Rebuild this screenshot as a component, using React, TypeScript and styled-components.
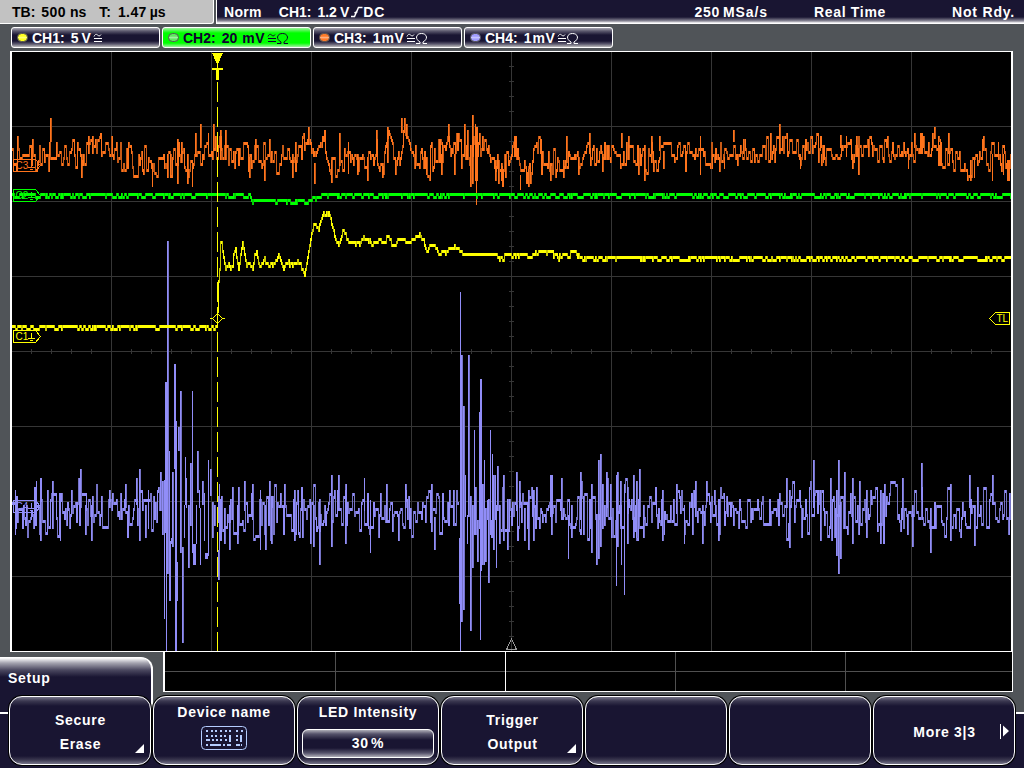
import React from "react";
import styled, { createGlobalStyle } from "styled-components";

type Span = [x: number, top: number, bottom: number, width?: number];
type Point = [x: number, y: number];

const LEFT = 12;
const RIGHT = 1011;
const NAVY = "#191532";

// small deterministic generator, so the traces are the same on every render
const createRandom = (seed: number) => {
  let s = seed;
  return () => {
    s = (s * 1664525 + 1013904223) % 4294967296;
    return s / 4294967296;
  };
};

const lerp = (points: Point[], x: number) => {
  for (let i = 1; i < points.length; i++) {
    const [x1, y1] = points[i];
    if (x <= x1) {
      const [x0, y0] = points[i - 1];
      return y0 + ((y1 - y0) * (x - x0)) / (x1 - x0 || 1);
    }
  }
  return points[points.length - 1][1];
};

// the scope resolves three screen pixels per ADC level
const snap = (y: number, origin: number) =>
  origin + Math.round((y - origin) / 3) * 3;

// one vertical bar per pixel column, split in a bright and a dim path
const bars = (
  levels: number[],
  fixed: Span[] = [],
  gaps: Point[] = []
) => {
  const covered = new Set<number>();
  let bright = "";
  let dim = "";
  levels.forEach((y, i) => {
    const x = LEFT + i;
    if (gaps.some(([from, to]) => x >= from && x < to)) return;
    const prev = i ? levels[i - 1] : y;
    const next = levels[i + 1] ?? y;
    const bar = `M${x + 0.5} ${Math.min(prev, y)}V${Math.max(prev, y) + 3}`;
    if (prev !== y && (y === next || i % 3 === 0)) dim += bar;
    else bright += bar;
  });
  fixed.forEach(([x, top, bottom, width = 2]) => {
    for (let i = 0; i < width; i++) {
      if (covered.has(x + i)) continue;
      const bar = `M${x + i + 0.5} ${top}V${bottom}`;
      if (i === 1 && width === 2) dim += bar;
      else bright += bar;
    }
  });
  return { bright, dim };
};

const noisy = (
  seed: number,
  center: Point[],
  spread: Point[],
  origin: number,
  hold: number,
  flip: number
) => {
  const random = createRandom(seed);
  const levels: number[] = [];
  let last = 0;
  let sign = 1;
  for (let x = LEFT; x < RIGHT; x++) {
    if (x === LEFT || random() > hold) {
      if (random() < flip) sign = -sign;
      const a = random();
      last = sign * a * (0.45 + 0.55 * random()) * lerp(spread, x);
    }
    levels.push(snap(lerp(center, x) + last, origin));
  }
  return levels;
};

const toggling = (seed: number, shape: Point[], origin: number, still: Point[]) => {
  const random = createRandom(seed);
  const levels: number[] = [];
  let low = false;
  for (let x = LEFT; x < RIGHT; x++) {
    const quiet = still.some(([from, to]) => x >= from && x < to);
    if (random() > (low ? 0.55 : 0.78)) low = !low;
    levels.push(snap(lerp(shape, x), origin) + (low && !quiet ? 3 : 0));
  }
  return levels;
};

const ch1Shape: Point[] = [
  [12, 325], [216, 325], [217, 310], [218, 280], [219, 268], [220, 241], [221, 241],
  [223, 256], [225, 267], [228, 262], [230, 267], [232, 264], [233, 253], [235, 247],
  [237, 262], [238, 268], [240, 253], [242, 241], [244, 253], [246, 264], [249, 262],
  [252, 268], [254, 253], [256, 250], [258, 262], [260, 265], [264, 256], [268, 264],
  [274, 262], [278, 253], [283, 265], [287, 260], [292, 262], [298, 260], [301, 264],
  [304, 274], [306, 262], [308, 250], [311, 232], [313, 223], [316, 225], [318, 228],
  [321, 217], [323, 211], [324, 214], [326, 211], [327, 214], [328, 211], [330, 217],
  [332, 226], [335, 238], [338, 244], [340, 238], [342, 229], [345, 232], [351, 241],
  [358, 241], [364, 235], [367, 235], [371, 243], [375, 238], [383, 240], [387, 235],
  [392, 241], [400, 238], [412, 238], [416, 235], [420, 232], [424, 241], [426, 247],
  [433, 243], [438, 252], [446, 250], [453, 244], [460, 250], [464, 253], [495, 253],
  [499, 256], [507, 253], [523, 253], [530, 256], [536, 250], [551, 250], [557, 255],
  [575, 250], [580, 256], [1011, 256],
];

const ch2Shape: Point[] = [
  [12, 193], [249, 193], [252, 199], [257, 199], [258, 200], [304, 200], [307, 199],
  [313, 197], [318, 195], [326, 193], [1011, 193],
];

const ch3Center: Point[] = [
  [12, 150], [40, 153], [60, 152], [80, 153], [100, 145], [115, 147], [130, 157],
  [150, 161], [170, 160], [190, 158], [215, 150], [240, 155], [260, 152], [290, 156],
  [308, 146], [315, 163], [324, 140], [331, 163], [345, 156], [370, 158], [376, 147],
  [383, 165], [388, 140], [396, 164], [403, 128], [407, 134], [410, 150], [420, 150],
  [427, 162], [440, 148], [470, 152], [485, 145], [499, 170], [508, 163], [515, 144],
  [520, 176], [526, 172], [537, 150], [550, 165], [565, 158], [600, 150], [640, 156],
  [700, 152], [750, 152], [780, 144], [800, 153], [810, 142], [830, 156], [850, 148],
  [875, 145], [890, 152], [910, 145], [935, 143], [942, 155], [973, 165], [983, 150],
  [1000, 160], [1011, 163],
];

const ch3Spikes: Span[] = [
  [50, 118, 142], [81, 154, 178], [88, 136, 154], [92, 136, 154], [152, 163, 187, 1],
  [167, 154, 178], [170, 154, 178], [177, 139, 184], [181, 142, 163], [187, 154, 184],
  [192, 160, 187, 1], [195, 133, 157], [200, 124, 148], [208, 133, 154, 1],
  [213, 124, 151], [220, 130, 160], [225, 130, 160], [249, 157, 178], [255, 139, 160],
  [264, 160, 181], [269, 139, 154], [292, 154, 178], [295, 142, 160], [308, 127, 145],
  [314, 163, 184], [324, 130, 142, 1], [331, 160, 183], [339, 133, 166], [348, 142, 174, 1],
  [357, 154, 175], [367, 157, 181], [376, 130, 151], [382, 163, 178], [387, 127, 163],
  [395, 160, 175], [401, 118, 133], [406, 124, 139], [426, 157, 175], [441, 154, 175],
  [448, 124, 142], [454, 154, 175], [464, 124, 157], [467, 130, 160], [470, 145, 187],
  [472, 115, 184], [475, 124, 181, 1], [476, 127, 205, 1], [477, 127, 181, 1],
  [482, 136, 151], [495, 160, 181], [498, 160, 184], [501, 163, 181], [514, 136, 157, 3],
  [520, 175, 190, 1], [528, 169, 187], [540, 139, 154], [550, 163, 181], [563, 160, 178],
  [566, 136, 163], [578, 157, 175], [589, 133, 154], [602, 154, 172], [621, 133, 148],
  [628, 136, 160], [638, 157, 175], [644, 145, 181], [651, 136, 163], [659, 136, 151],
  [663, 151, 169], [700, 136, 175, 1], [712, 154, 169, 1], [724, 157, 169, 1],
  [733, 130, 142], [743, 139, 154], [779, 124, 154], [800, 154, 169, 1], [821, 154, 166],
  [840, 135, 148], [846, 136, 157, 1], [852, 154, 169], [856, 136, 148], [858, 148, 175],
  [908, 154, 169, 1], [914, 133, 148], [920, 133, 154, 3], [934, 127, 139],
  [938, 145, 166, 3], [948, 133, 154], [970, 160, 181], [974, 160, 178, 1],
  [983, 136, 151], [992, 154, 181, 1], [998, 142, 160, 1], [1003, 154, 175, 1],
  [1007, 160, 181, 3],
];

const ch4Spikes: Span[] = [
  [15, 490, 535, 1], [36, 481, 526, 1], [40, 490, 541], [52, 481, 529], [60, 493, 541, 1],
  [80, 469, 506], [85, 505, 535], [91, 505, 541], [109, 490, 508], [125, 484, 508],
  [136, 478, 505], [139, 469, 541], [145, 505, 538], [148, 490, 529, 1],
  [160, 472, 511], [162, 481, 535], [164, 480, 619, 1], [165, 382, 533, 1], [166, 382, 651, 1],
  [167, 241, 574], [169, 451, 601, 1], [170, 541, 601, 1], [171, 538, 544, 1],
  [172, 472, 547], [174, 364, 469, 1], [175, 364, 651, 1], [176, 421, 651, 1],
  [177, 562, 601, 1], [178, 427, 451], [180, 391, 553], [182, 547, 643], [184, 505, 538, 1],
  [185, 457, 505, 1], [186, 478, 508, 1], [188, 505, 568], [190, 463, 526], [192, 391, 553, 1],
  [193, 544, 565, 3], [196, 505, 544, 1], [197, 451, 493], [199, 490, 508, 1], [200, 508, 565, 1],
  [202, 481, 505], [204, 493, 541, 1], [205, 553, 559, 3], [208, 460, 556, 1],
  [210, 469, 496], [212, 502, 538], [214, 505, 526], [218, 550, 580], [219, 484, 550, 1],
  [224, 508, 544], [229, 505, 550], [237, 505, 544], [244, 481, 511], [252, 484, 520],
  [260, 490, 550, 1], [265, 505, 550], [271, 496, 544], [294, 490, 541], [313, 505, 547],
  [319, 499, 565], [331, 475, 547], [338, 475, 511], [345, 490, 544], [364, 478, 511, 1],
  [370, 500, 553, 1], [386, 484, 520], [405, 484, 508], [431, 484, 532], [434, 517, 550],
  [453, 490, 526], [459, 538, 604, 1], [460, 292, 651, 1], [461, 355, 622], [463, 406, 610],
  [465, 475, 517, 1], [467, 515, 544, 1], [468, 355, 517], [470, 496, 631], [472, 505, 568],
  [474, 430, 535, 1], [475, 487, 535], [477, 520, 562], [479, 412, 529, 1], [480, 379, 640, 1],
  [481, 379, 571, 1], [482, 484, 565], [484, 460, 565, 1], [485, 508, 562], [487, 500, 520, 1],
  [488, 499, 583], [490, 430, 535, 1], [491, 520, 538, 1], [492, 454, 538, 1], [493, 475, 550],
  [495, 475, 520, 1], [496, 505, 568, 1], [497, 466, 511], [499, 505, 544], [503, 475, 541],
  [507, 499, 550], [516, 472, 511], [519, 481, 508], [524, 508, 541], [528, 490, 550],
  [533, 490, 541], [550, 475, 517, 3], [561, 478, 520, 2], [568, 515, 559, 1], [571, 505, 538],
  [580, 472, 520], [591, 484, 553], [596, 514, 565], [598, 460, 559], [600, 454, 547],
  [602, 484, 529], [606, 472, 517], [610, 484, 520], [616, 475, 586, 1], [617, 472, 547],
  [620, 481, 526], [621, 505, 565, 1], [624, 484, 595, 1], [627, 487, 544], [633, 475, 538],
  [636, 481, 538], [639, 469, 517], [643, 505, 538], [662, 490, 538], [676, 484, 514],
  [684, 505, 544, 1], [695, 481, 517, 2], [702, 505, 544], [706, 481, 502], [714, 490, 505],
  [718, 508, 541], [786, 478, 508], [789, 490, 548], [813, 460, 508], [820, 490, 541],
  [830, 478, 526], [836, 490, 556], [838, 460, 574], [840, 502, 559], [844, 472, 526],
  [852, 478, 544], [866, 490, 538], [880, 490, 544], [902, 478, 520], [912, 505, 547],
  [921, 463, 500], [930, 508, 553], [950, 484, 541], [969, 475, 508], [974, 505, 546],
  [992, 475, 505],
];

const keyRows = [
  [[206, 2], [211, 2], [215, 2], [220, 2], [225, 2], [229, 2], [236, 2], [241, 2]],
  [[206, 2], [211, 2], [215, 2], [220, 2], [224, 2], [229, 2], [236, 2], [240, 2]],
  [[206, 4], [212, 2], [216, 2], [220, 2], [225, 2], [229, 2], [236, 2], [240, 2]],
  [[206, 2], [210, 11], [223, 2], [227, 4], [236, 4], [241, 1]],
];

const traces = [
  {
    color: "#918df8",
    dimColor: "#7573c6",
    ...bars(
      noisy(
        77,
        [[12, 508], [300, 511], [1011, 510]],
        [[12, 34], [95, 31], [115, 24], [150, 32], [300, 36], [450, 31], [560, 30], [600, 40], [640, 32], [740, 26], [800, 32], [850, 40], [1011, 33]],
        511,
        0.35,
        0.62
      ),
      ch4Spikes,
      [[163, 218], [459, 500]]
    ),
  },
  {
    color: "#ff741c",
    dimColor: "#c65a16",
    ...bars(noisy(31, ch3Center, [[12, 20], [230, 20], [640, 18], [1011, 18]], 154, 0.35, 0.5), ch3Spikes),
  },
  {
    color: "#00ff00",
    dimColor: "#00d000",
    ...bars(toggling(9, ch2Shape, 193, [])),
  },
  {
    color: "#ffff00",
    dimColor: "#c8c800",
    ...bars(toggling(4, ch1Shape, 256, [[216, 262], [302, 346], [464, 496], [620, 640]])),
  },
];

const range = (from: number, to: number, step: number) => {
  const list: number[] = [];
  for (let v = from; v < to; v += step) list.push(v);
  return list;
};

const ChannelTag = ({ y, name, color }: { y: number; name: string; color: string }) => (
  <g transform={`translate(13 ${y})`} stroke={color} fill="none">
    <path d="M.5.5H22.5L27.5 6.5L22.5 12.5H.5Z" />
    <TagText x="2.5" y="10" fill={color} stroke="none">
      {name}
    </TagText>
    <path d="M18.5 3V8M15 8.5H22M17 10.5H20" />
  </g>
);

const Waveforms = () => (
  <Plot width="999" height="599" viewBox="12 52 999 599" shapeRendering="crispEdges">
    <path
      stroke="#363636"
      d={
        range(111, 1011, 100).map((x) => `M${x}.5 52V651`).join("") +
        range(126, 651, 75).map((y) => `M12 ${y}.5H1011`).join("") +
        range(66, 651, 15).map((y) => `M509 ${y}.5H514`).join("") +
        range(31, 1011, 20).map((x) => `M${x}.5 349V354`).join("")
      }
    />
    {traces.map(({ color, dimColor, bright, dim }) => (
      <g key={color}>
        <path stroke={dimColor} d={dim} />
        <path stroke={color} d={bright} />
      </g>
    ))}
    <path stroke="#ffff00" strokeDasharray="20 5" d="M217.5 82V651" />
    <path fill="#ffff00" d="M212 53H223L218 64V68H223V70H219V80H216V70H212V68H217V64Z" />
    <path
      stroke="#ffff00"
      fill="none"
      d="M210 318.5H213M222 318.5H225M217.5 313.5L222.5 318.5L217.5 323.5L212.5 318.5Z"
    />
    <ChannelTag y={159} name="C3" color="#ff741c" />
    <ChannelTag y={189} name="C2" color="#00ff00" />
    <ChannelTag y={330} name="C1" color="#ffff00" />
    <ChannelTag y={500} name="C4" color="#918df8" />
    <path stroke="#ffff00" fill="none" d="M1009.5 312.5H995.5L989.5 318.5L995.5 324.5H1009.5Z" />
    <TagText x="996.5" y="322" fill="#ffff00">
      TL
    </TagText>
    <path stroke="#999" fill="none" d="M511.5 639L506.5 649.5H516.5Z" />
  </Plot>
);

const KeyboardIcon = () => (
  <svg width="46" height="24" viewBox="201 726 46 24" fill="#b5cdff">
    <rect x="201.5" y="726.5" width="45" height="23" rx="4" fill="none" stroke="#b5cdff" />
    {keyRows.map((row, i) =>
      row.map(([x, w]) => (
        <rect
          key={`${i}-${x}`}
          x={x}
          y={730 + Math.round(i * 4.7)}
          width={w}
          height={2}
          shapeRendering="crispEdges"
        />
      ))
    )}
    <path d="M229 735h2v7h-2zM240 735h2v7h-2z" shapeRendering="crispEdges" />
  </svg>
);

const Coupling = ({ ohm }: { ohm?: boolean }) => (
  <CouplingIcon width="22" height="14" viewBox="0 0 22 14" fill="none" stroke="currentColor">
    <path d="M1 5.500C2 3 3.500 3 4.500 4S7 5.500 8 3.500M1 7.500H9M1 10.500H9" />
    {ohm && (
      <path d="M10 12.500H14V11C11.500 9.500 10.500 8 10.500 6C11 3.500 13 2.500 15.500 2.500S20 3.500 20.500 6C20.500 8 19.500 9.500 17 11V12.500H21" />
    )}
  </CouplingIcon>
);

const channels = [
  { name: "CH1:", value: "5", unit: "V", color: "#ffff20" },
  { name: "CH2:", value: "20", unit: "mV", color: "#60e860", active: true, ohm: true },
  { name: "CH3:", value: "1", unit: "mV", color: "#ff7a28", ohm: true },
  { name: "CH4:", value: "1", unit: "mV", color: "#a09cff", ohm: true },
];

const App = () => {
  return (
    <>
      <GlobalStyle />
      <Screen>
        <TopBar>
          <TimeBase>
            <Word>TB:</Word>
            <Word $gap={6} $spacing={0.4}>500</Word>
            <Word $gap={4}>ns</Word>
            <Word $gap={13}>T:</Word>
            <Word $gap={7} $spacing={0.4}>1.47</Word>
            <Word $gap={3}>µs</Word>
          </TimeBase>
          <Status>
            <Word $spacing={0.3}>Norm</Word>
            <Word $gap={17}>CH1:</Word>
            <Word $gap={6}>1.2</Word>
            <Word $gap={3}>V</Word>
            <svg width="14" height="13" viewBox="0 0 14 13" fill="none" stroke="#fff" strokeWidth="1.5">
              <path d="M2 11.500H5.500L9.500 2.500H13.500M5.500 8L8.500 6.500" />
            </svg>
            <Word $spacing={0.8}>DC</Word>
            <StatusRight>
              <Word $spacing={0.7}>250</Word>
              <Word $gap={3} $spacing={0.9}>MSa/s</Word>
              <Word $gap={46} $spacing={0.7}>Real Time</Word>
              <Word $gap={66} $spacing={0.8}>Not Rdy.</Word>
            </StatusRight>
          </Status>
        </TopBar>

        <ChannelRow>
          {channels.map(({ name, value, unit, color, active, ohm }) => (
            <Channel key={name} $active={active}>
              <Led $color={color} />
              <Word>{name}</Word>
              <Word $gap={6}>{value}</Word>
              <Word $gap={value === "1" ? 1 : value === "20" ? 5 : 3} $spacing={0.5}>
                {unit}
              </Word>
              <Coupling ohm={ohm} />
            </Channel>
          ))}
        </ChannelRow>

        <Scope>
          <Waveforms />
        </Scope>

        <Middle>
          <SetupTab>Setup</SetupTab>
          <Overview>
            <svg width="847" height="39" viewBox="165 652 847 39" shapeRendering="crispEdges">
              <path stroke="#505050" d="M165 671.5H1012M335.500 652V691M675.500 652V691M845.500 652V691" />
              <path stroke="#fff" d="M505.500 652V691" />
            </svg>
          </Overview>
        </Middle>

        <SoftKeys>
          <SoftKey>
            <Caption>Secure</Caption>
            <Caption>Erase</Caption>
            <Corner />
          </SoftKey>
          <SoftKey $top>
            <Caption>Device name</Caption>
            <KeyboardIcon />
          </SoftKey>
          <SoftKey $top>
            <Caption>LED Intensity</Caption>
            <Value>30 %</Value>
          </SoftKey>
          <SoftKey>
            <Caption>Trigger</Caption>
            <Caption>Output</Caption>
            <Corner />
          </SoftKey>
          <SoftKey />
          <SoftKey />
          <SoftKey>
            <Caption>More 3|3</Caption>
            <MoreArrow width="10" height="16" viewBox="0 0 10 16" fill="#fff">
              <path d="M0 1h1v15h-1zM3 2.500L9 8L3 13.500Z" />
            </MoreArrow>
          </SoftKey>
        </SoftKeys>
      </Screen>
    </>
  );
};

const GlobalStyle = createGlobalStyle`
  body {
    margin: 0;
    overflow: hidden;
    background: #505458;
  }
`;

const Screen = styled.div`
  width: 1024px;
  height: 768px;
  display: flex;
  flex-direction: column;
  overflow: hidden;
  background: #505458;
  color: #fff;
  font: bold 14px/16px "Liberation Sans", Arial, sans-serif;
`;

const Word = styled.span<{ $gap?: number; $spacing?: number }>`
  margin-left: ${(props) => props.$gap ?? 0}px;
  letter-spacing: ${(props) => props.$spacing ?? 0}px;
  white-space: pre;
`;

const TopBar = styled.header`
  display: flex;
  gap: 2px;
  height: 24px;
  flex: none;
`;

const TimeBase = styled.div`
  box-sizing: border-box;
  width: 214px;
  display: flex;
  align-items: center;
  padding-left: 12px;
  color: #000;
  background: #c2c2c2;
  border-right: 1px solid #fff;
  border-bottom: 1px solid #fff;
  border-radius: 0 0 3px 0;
`;

const Status = styled.div`
  box-sizing: border-box;
  flex: 1;
  display: flex;
  align-items: center;
  padding-left: 7px;
  background: linear-gradient(${NAVY} 17px, #8c8a98 21px, #fff 23px);
  border-left: 1px solid #fff;
  border-bottom: 1px solid #fff;
`;

const StatusRight = styled.div`
  display: flex;
  margin-left: auto;
  padding-right: 9px;
`;

const ChannelRow = styled.div`
  display: flex;
  gap: 2px;
  flex: none;
  height: 21px;
  padding: 3px 11px;
`;

const Channel = styled.div<{ $active?: boolean }>`
  box-sizing: border-box;
  width: 149px;
  height: 21px;
  display: flex;
  align-items: center;
  padding-left: 5px;
  border: 1px solid #fff;
  border-radius: 3px;
  color: ${(props) => (props.$active ? "#100030" : "#fff")};
  background: ${(props) =>
    props.$active
      ? "linear-gradient(#a0f0a0, #00ff00 5px, #00ff00 15px, #a0f0a0)"
      : `linear-gradient(#aaa9b4, #5c596e 3px, ${NAVY} 7px, ${NAVY} 13px, #5c596e 16px, #bbb)`};
`;

const Led = styled.i<{ $color: string }>`
  box-sizing: border-box;
  width: 11px;
  height: 9px;
  margin-right: 4px;
  border: 1px solid #555;
  border-radius: 5px;
  background: linear-gradient(transparent 30%, #fff6 50%, transparent 75%),
    ${(props) => props.$color};
`;

const CouplingIcon = styled.svg`
  margin-left: 2px;
`;

const Scope = styled.main`
  display: flex;
  flex: none;
  width: 999px;
  height: 599px;
  margin-left: 10px;
  border: solid #fff;
  border-width: 1px 2px 1px 2px;
  background: #000;
`;

const Plot = styled.svg`
  display: block;
`;

const TagText = styled.text`
  font: 10px "Liberation Sans", Arial, sans-serif;
`;

const Middle = styled.div`
  display: flex;
  justify-content: space-between;
  flex: none;
  height: 43px;
`;

const SetupTab = styled.div`
  box-sizing: border-box;
  width: 153px;
  height: 57px;
  margin-top: 5px;
  padding: 12px 0 0 8px;
  border-right: 2px solid #fff;
  border-top: 1px solid #fff;
  border-radius: 0 12px 0 0;
  letter-spacing: 0.7px;
  background: linear-gradient(#fff, #a5a4b0 5px, #4b4860 12px, ${NAVY} 19px);
`;

const Overview = styled.div`
  box-sizing: border-box;
  display: flex;
  width: 850px;
  height: 40px;
  margin-right: 11px;
  border: solid #fff;
  border-width: 0 1px 1px 2px;
  background: #000;
`;

const SoftKeys = styled.nav`
  box-sizing: border-box;
  display: flex;
  flex: 1;
  gap: 2px;
  padding: 1px 9px 0;
  background: linear-gradient(transparent 17px, #fff 17px, #fff 19px, ${NAVY} 19px);
`;

const SoftKey = styled.button<{ $top?: boolean }>`
  box-sizing: border-box;
  position: relative;
  flex: none;
  width: 142px;
  height: 69px;
  padding: ${(props) => (props.$top ? "3px 3px 0" : "2px 0 0 1px")};
  display: flex;
  flex-direction: column;
  align-items: center;
  justify-content: ${(props) => (props.$top ? "flex-start" : "center")};
  gap: ${(props) => (props.$top ? "2px" : "0")};
  border: 1px solid #fff;
  border-radius: 13px;
  box-shadow: 0 0 0 1px #000;
  color: inherit;
  font: inherit;
  background: linear-gradient(#77758a, #3b3850 4px, ${NAVY} 9px, ${NAVY} 59px, #3b3850 63px, #77758a);
`;

const Caption = styled.span`
  line-height: 24px;
  letter-spacing: 0.7px;
  white-space: pre;
`;

const Value = styled.div`
  box-sizing: border-box;
  width: 132px;
  height: 29px;
  margin-top: 3px;
  border: 1px solid #fff;
  border-radius: 6px;
  line-height: 27px;
  word-spacing: -2px;
  letter-spacing: 0.6px;
  background: linear-gradient(#b0afb8, #55526a 4px, ${NAVY} 10px, ${NAVY} 18px, #55526a 23px, #b0afb8);
`;

const Corner = styled.i`
  position: absolute;
  right: 6px;
  bottom: 11px;
  width: 9px;
  height: 9px;
  background: #fff;
  clip-path: polygon(100% 0, 100% 100%, 0 100%);
`;

const MoreArrow = styled.svg`
  position: absolute;
  right: 4px;
  top: 26px;
`;

export default App;
